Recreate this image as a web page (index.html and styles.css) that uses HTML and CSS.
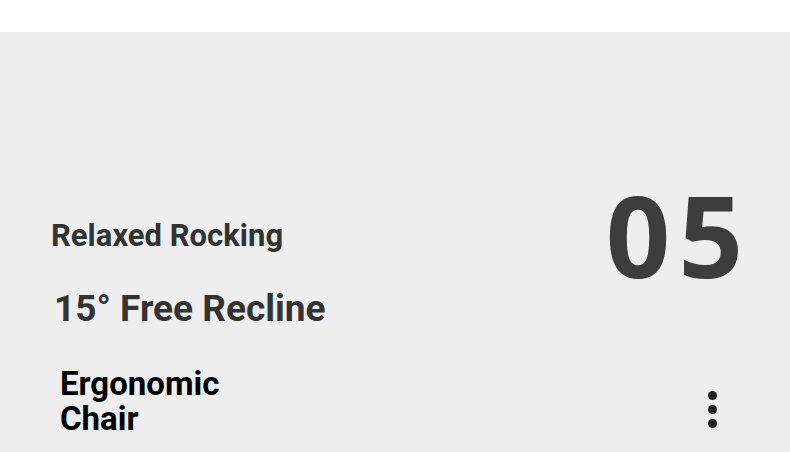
FILE: index.html
```html
<!DOCTYPE html>
<html lang="en">
<head>
    <meta charset="UTF-8">
    <meta name="viewport" content="width=device-width, initial-scale=1.0">
    <title>Ergonomic Chair</title>
    <link rel="stylesheet" href="styles.css">
</head>
<body>
    <div class="topbar"></div>
    <div class="panel">
        <div class="feature">
            <div class="feature-text">
                <h2 class="subtitle">Relaxed Rocking</h2>
                <h1 class="title">15° Free Recline</h1>
            </div>
            <div class="number">05</div>
        </div>
        <div class="footer">
            <h3 class="product">
                <span class="product-line">Ergonomic</span>
                <span class="product-line">Chair</span>
            </h3>
            <button class="menu" aria-label="More">
                <span></span><span></span><span></span>
            </button>
        </div>
    </div>
</body>
</html>
```

FILE: styles.css
```css
body {
    margin: 0;
    font-family: Roboto, "Liberation Sans", sans-serif;
    background-color: #fff;
    overflow: hidden;
}

.topbar {
    height: 32px;
    background-color: #fff;
}

.panel {
    height: 420px;
    background-color: #eeeeee;
    display: flex;
    flex-direction: column;
    justify-content: flex-end;
    box-sizing: border-box;
}

.feature {
    display: flex;
    justify-content: space-between;
    align-items: flex-start;
    padding: 0 47px 0 51px;
}

.subtitle {
    margin: 0;
    font-size: 31px;
    font-weight: 700;
    color: #333;
    line-height: 34px;
    padding-top: 41px;
}

.title {
    margin: 0;
    font-size: 37px;
    font-weight: 700;
    color: #333;
    line-height: 44px;
    padding: 34px 0 0 3px;
}

.number {
    font-family: "Open Sans", sans-serif;
    font-size: 113px;
    font-weight: 700;
    color: #3d3d3d;
    letter-spacing: 8px;
    line-height: 113px;
    margin-right: -8px;
}

.footer {
    display: flex;
    justify-content: space-between;
    align-items: flex-end;
    padding: 35px 73px 16px 60px;
}

.product {
    margin: 0;
    font-size: 33px;
    font-weight: 700;
    color: #000;
    line-height: 35px;
}

.product-line {
    display: block;
}

.menu {
    display: flex;
    flex-direction: column;
    gap: 5px;
    padding: 0;
    margin-bottom: 8px;
    background: none;
    border: none;
    cursor: pointer;
}

.menu span {
    width: 9px;
    height: 9px;
    border-radius: 50%;
    background-color: #222;
}
```
